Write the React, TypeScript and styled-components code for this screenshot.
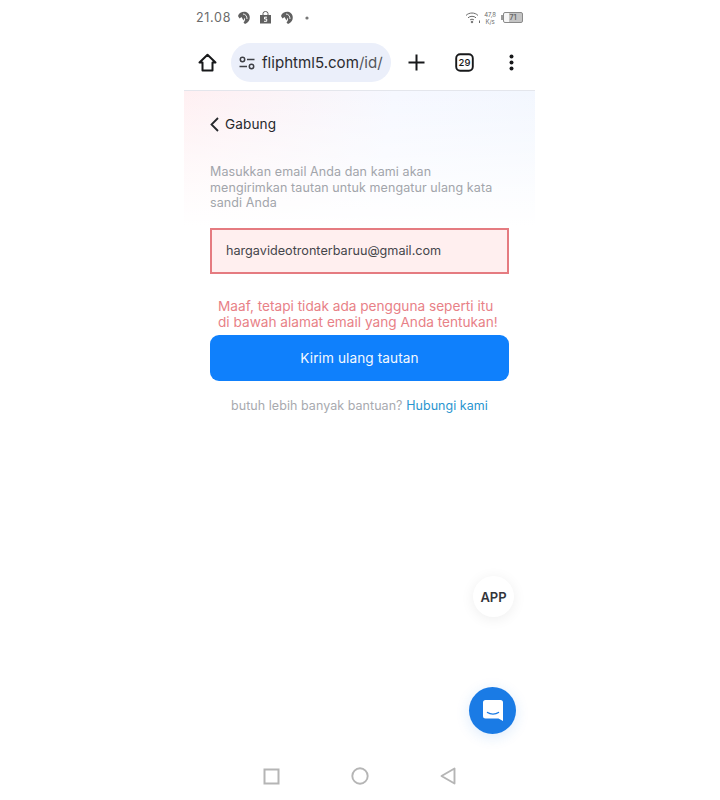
import styled, { createGlobalStyle } from 'styled-components';

const GlobalStyle = createGlobalStyle`
  html, body {
    margin: 0;
    padding: 0;
    background: #fff;
  }
  * {
    box-sizing: border-box;
  }
`;

const Phone = styled.div`
  position: relative;
  width: 351px;
  height: 800px;
  margin-left: 184px;
  display: flex;
  flex-direction: column;
  font-family: Inter, 'Liberation Sans', sans-serif;
  overflow: hidden;
`;

const StatusBar = styled.div`
  height: 35px;
  padding: 0 12px 0 12px;
  display: flex;
  align-items: center;
  justify-content: space-between;
  color: #6b6b6b;
`;

const StatusGroup = styled.div`
  display: flex;
  align-items: center;
`;

const Clock = styled.span`
  font-size: 12.5px;
  font-weight: 400;
  letter-spacing: 0.7px;
  margin-right: 6px;
`;

const StatusIcon = styled.svg<{ $gap: number }>`
  display: block;
  margin-right: ${(props) => props.$gap}px;
`;

const Speed = styled.span`
  font-size: 6px;
  line-height: 7px;
  text-align: center;
  margin: 0 5px 0 3px;
`;

const BatteryNub = styled.span`
  width: 2px;
  height: 5px;
  background: #9a9a9a;
`;

const Battery = styled.span`
  width: 20px;
  height: 11px;
  border: 1px solid #8a8a8a;
  border-radius: 2px;
  background: linear-gradient(to left, #c4c4c4 72%, #f6f6f6 72%);
  font-size: 7px;
  font-weight: 600;
  line-height: 9px;
  text-align: center;
  color: #666;
`;

const Toolbar = styled.div`
  height: 56px;
  display: flex;
  align-items: center;
  border-bottom: 1px solid #e4e6ec;
`;

const ToolButton = styled.div<{ $width: number }>`
  width: ${(props) => props.$width}px;
  display: flex;
  justify-content: center;
  align-items: center;
  flex-shrink: 0;
`;

const AddressBar = styled.div`
  width: 160px;
  height: 39px;
  border-radius: 20px;
  background: #ebeffa;
  display: flex;
  align-items: center;
  padding-left: 8px;
  gap: 7px;
  flex-shrink: 0;
  font-size: 15.1px;
  color: #2b2c30;
  white-space: nowrap;
  overflow: hidden;
`;

const AddressPath = styled.span`
  color: #55575c;
`;

const Content = styled.main`
  flex: 1;
  padding: 23px 26px 0;
  background:
    linear-gradient(to bottom, rgba(255, 255, 255, 0) 0, #fff 135px),
    linear-gradient(100deg, #fff0f2 0%, #f6f8ff 45%, #f0f6fe 100%);
`;

const BackLink = styled.div`
  height: 20px;
  display: flex;
  align-items: center;
  gap: 6px;
  font-size: 13.6px;
  font-weight: 400;
  letter-spacing: 0.1px;
  color: #26282c;
`;

const Intro = styled.p`
  margin: 30px 0 0;
  font-size: 12.5px;
  line-height: 15.5px;
  letter-spacing: 0.09px;
  color: #a2a5ab;
`;

const EmailField = styled.div`
  height: 46px;
  margin-top: 17px;
  padding-left: 14px;
  display: flex;
  align-items: center;
  border: 2px solid #e57b80;
  background: #ffefef;
  font-size: 12.65px;
  color: #45464b;
`;

const ErrorText = styled.p`
  margin: 24px 0 0;
  padding-left: 8px;
  font-size: 13.65px;
  line-height: 16px;
  color: #e88187;
  white-space: nowrap;
`;

const SubmitButton = styled.button`
  display: block;
  width: 100%;
  height: 46px;
  margin-top: 5px;
  border: 0;
  border-radius: 9px;
  background: #0f80fc;
  color: #f4f9ff;
  font-family: inherit;
  font-size: 13.6px;
  font-weight: 400;
  letter-spacing: 0.1px;
`;

const HelpLine = styled.p`
  margin: 17px 0 0;
  text-align: center;
  font-size: 12.5px;
  letter-spacing: 0.05px;
  color: #a8aaaf;
`;

const HelpLink = styled.a`
  color: #2a95cf;
`;

const AppBadge = styled.div`
  position: absolute;
  left: 289px;
  top: 576px;
  width: 41px;
  height: 41px;
  border-radius: 50%;
  background: #fff;
  box-shadow: 0 2px 14px rgba(0, 0, 0, 0.07);
  display: flex;
  align-items: center;
  justify-content: center;
  font-size: 13px;
  font-weight: 600;
  color: #33353a;
`;

const ChatButton = styled.div`
  position: absolute;
  left: 285px;
  top: 687px;
  width: 47px;
  height: 47px;
  border-radius: 50%;
  background: #1a7be5;
  box-shadow: 0 3px 14px rgba(26, 123, 229, 0.15);
  display: flex;
  align-items: center;
  justify-content: center;
`;

const NavBar = styled.div`
  height: 48px;
  padding: 0 79px 0 79px;
  display: flex;
  align-items: center;
  justify-content: space-between;
`;

function SwirlIcon({ gap }: { gap: number }) {
  return (
    <StatusIcon $gap={gap} width="14" height="14" viewBox="0 0 14 14">
      <path
        d="M1 5 C2 1.5 6 0.2 9 1 C12 2 13.5 5.5 12.5 8.5 C11.8 10.5 10 12 8 13 L6.5 11.5 C8 10 8.5 8 7.5 6.8 L6.5 9.5 L4.5 6 L2.5 7.5 Z"
        fill="#606060"
      />
      <path d="M6 3 C8.5 3.2 10 5 10 8" fill="none" stroke="#fff" strokeWidth="0.9" />
    </StatusIcon>
  );
}

export default function App() {
  return (
    <>
      <GlobalStyle />
      <Phone>
        <StatusBar>
          <StatusGroup>
            <Clock>21.08</Clock>
            <SwirlIcon gap={8} />
            <StatusIcon $gap={8} width="13" height="13" viewBox="0 0 13 13">
              <path d="M1 4 H12 V12.5 H1 Z" fill="#606060" />
              <path d="M4 4.5 V2.5 A2.5 2 0 0 1 9 2.5 V4.5" fill="none" stroke="#606060" />
              <path d="M8 6.2 H5.5 V8 H7.7 V10.3 H5" fill="none" stroke="#fff" strokeWidth="1" />
            </StatusIcon>
            <SwirlIcon gap={11} />
            <StatusIcon $gap={8} width="4" height="4" viewBox="0 0 4 4">
              <circle cx="2" cy="2" r="1.6" fill="#777" />
            </StatusIcon>
          </StatusGroup>
          <StatusGroup>
            <svg width="16" height="13" viewBox="0 0 16 13" fill="none" stroke="#6b6b6b" strokeWidth="1">
              <path d="M1 4.5 C4 1.2 10 1.2 13 4.5" />
              <path d="M3 6.8 C5 4.8 9 4.8 11 6.8" />
              <path d="M5 9 C6 8 8 8 9 9" />
              <circle cx="7" cy="11" r="0.8" fill="#6b6b6b" />
              <path d="M14.5 9.5 V12" />
            </svg>
            <Speed>
              47,8
              <br />
              K/s
            </Speed>
            <BatteryNub />
            <Battery>71</Battery>
          </StatusGroup>
        </StatusBar>
        <Toolbar>
          <ToolButton $width={47}>
            <svg width="19" height="19" viewBox="0 0 19 19" fill="none" stroke="#17181a" strokeWidth="2" strokeLinejoin="round">
              <path d="M1.5 9.5 L9.5 1.8 L17.5 9.5 H14.5 V17.5 H4.5 V9.5 Z" />
            </svg>
          </ToolButton>
          <AddressBar>
            <svg width="16" height="14" viewBox="0 0 16 14" fill="none" stroke="#3e4046" strokeWidth="1.5">
              <circle cx="3.5" cy="3.5" r="2.2" />
              <path d="M8 3.5 H15.5" />
              <path d="M0.5 10.5 H8" />
              <circle cx="12.5" cy="10.5" r="2.2" />
            </svg>
            <span>
              fliphtml5.com<AddressPath>/id/</AddressPath>
            </span>
          </AddressBar>
          <ToolButton $width={50}>
            <svg width="17" height="17" viewBox="0 0 17 17" stroke="#17181a" strokeWidth="2">
              <path d="M0.5 8.5 H16.5 M8.5 0.5 V16.5" />
            </svg>
          </ToolButton>
          <ToolButton $width={47}>
            <svg width="19" height="19" viewBox="0 0 19 19">
              <rect x="1.2" y="1.2" width="16.6" height="16.6" rx="4" fill="none" stroke="#17181a" strokeWidth="1.9" />
              <text x="9.5" y="13" textAnchor="middle" fontSize="9.5" fontWeight="500" fill="#17181a" fontFamily="Inter, sans-serif">
                29
              </text>
            </svg>
          </ToolButton>
          <ToolButton $width={47}>
            <svg width="5" height="17" viewBox="0 0 5 17" fill="#17181a">
              <circle cx="2.5" cy="2.5" r="2" />
              <circle cx="2.5" cy="8.5" r="2" />
              <circle cx="2.5" cy="14.5" r="2" />
            </svg>
          </ToolButton>
        </Toolbar>
        <Content>
          <BackLink>
            <svg width="9" height="15" viewBox="0 0 9 15" fill="none" stroke="#26282c" strokeWidth="1.8">
              <path d="M8 1 L1.5 7.5 L8 14" />
            </svg>
            Gabung
          </BackLink>
          <Intro>
            Masukkan email Anda dan kami akan
            <br />
            mengirimkan tautan untuk mengatur ulang kata
            <br />
            sandi Anda
          </Intro>
          <EmailField>hargavideotronterbaruu@gmail.com</EmailField>
          <ErrorText>
            Maaf, tetapi tidak ada pengguna seperti itu
            <br />
            di bawah alamat email yang Anda tentukan!
          </ErrorText>
          <SubmitButton>Kirim ulang tautan</SubmitButton>
          <HelpLine>
            butuh lebih banyak bantuan? <HelpLink>Hubungi kami</HelpLink>
          </HelpLine>
        </Content>
        <AppBadge>APP</AppBadge>
        <ChatButton>
          <svg width="22" height="23" viewBox="0 0 22 23">
            <path d="M3.5 1 H18.5 A2.5 2.5 0 0 1 21 3.5 V22 L16.5 19.5 H3.5 A2.5 2.5 0 0 1 1 17 V3.5 A2.5 2.5 0 0 1 3.5 1 Z" fill="#fff" />
            <path d="M5.5 13.5 C8.5 15.6 13.5 15.6 16.5 13.5" fill="none" stroke="#1a7be5" strokeWidth="1.4" strokeLinecap="round" />
          </svg>
        </ChatButton>
        <NavBar>
          <svg width="17" height="17" viewBox="0 0 17 17" fill="none" stroke="#b5b5b5" strokeWidth="2">
            <rect x="1.5" y="1.5" width="14" height="14" />
          </svg>
          <svg width="18" height="18" viewBox="0 0 18 18" fill="none" stroke="#b5b5b5" strokeWidth="1.9">
            <circle cx="9" cy="9" r="7.7" />
          </svg>
          <svg width="16" height="18" viewBox="0 0 16 18" fill="none" stroke="#b5b5b5" strokeWidth="1.9" strokeLinejoin="round">
            <path d="M14.5 1.5 V16.5 L1.5 9 Z" />
          </svg>
        </NavBar>
      </Phone>
    </>
  );
}
